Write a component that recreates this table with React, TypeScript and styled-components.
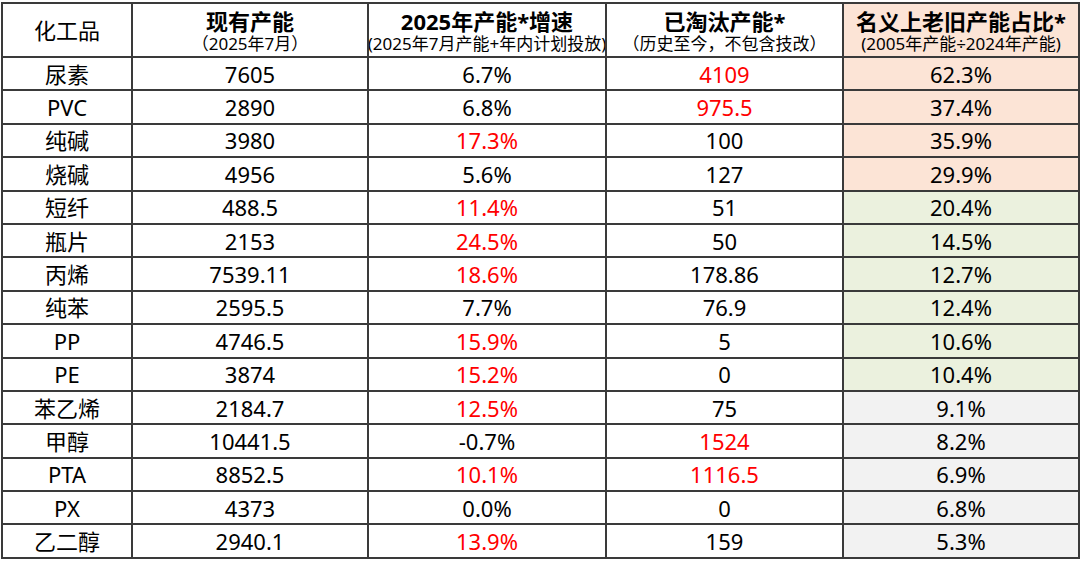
import { createGlobalStyle } from "styled-components";
import styled from "styled-components";

type Tone = "orange" | "green" | "gray";

interface RowData {
  name: string;
  capacity: string;
  growth: string;
  growthRed?: boolean;
  retired: string;
  retiredRed?: boolean;
  share: string;
  tone: Tone;
}

const ROWS: RowData[] = [
  { name: "尿素", capacity: "7605", growth: "6.7%", retired: "4109", retiredRed: true, share: "62.3%", tone: "orange" },
  { name: "PVC", capacity: "2890", growth: "6.8%", retired: "975.5", retiredRed: true, share: "37.4%", tone: "orange" },
  { name: "纯碱", capacity: "3980", growth: "17.3%", growthRed: true, retired: "100", share: "35.9%", tone: "orange" },
  { name: "烧碱", capacity: "4956", growth: "5.6%", retired: "127", share: "29.9%", tone: "orange" },
  { name: "短纤", capacity: "488.5", growth: "11.4%", growthRed: true, retired: "51", share: "20.4%", tone: "green" },
  { name: "瓶片", capacity: "2153", growth: "24.5%", growthRed: true, retired: "50", share: "14.5%", tone: "green" },
  { name: "丙烯", capacity: "7539.11", growth: "18.6%", growthRed: true, retired: "178.86", share: "12.7%", tone: "green" },
  { name: "纯苯", capacity: "2595.5", growth: "7.7%", retired: "76.9", share: "12.4%", tone: "green" },
  { name: "PP", capacity: "4746.5", growth: "15.9%", growthRed: true, retired: "5", share: "10.6%", tone: "green" },
  { name: "PE", capacity: "3874", growth: "15.2%", growthRed: true, retired: "0", share: "10.4%", tone: "green" },
  { name: "苯乙烯", capacity: "2184.7", growth: "12.5%", growthRed: true, retired: "75", share: "9.1%", tone: "gray" },
  { name: "甲醇", capacity: "10441.5", growth: "-0.7%", retired: "1524", retiredRed: true, share: "8.2%", tone: "gray" },
  { name: "PTA", capacity: "8852.5", growth: "10.1%", growthRed: true, retired: "1116.5", retiredRed: true, share: "6.9%", tone: "gray" },
  { name: "PX", capacity: "4373", growth: "0.0%", retired: "0", share: "6.8%", tone: "gray" },
  { name: "乙二醇", capacity: "2940.1", growth: "13.9%", growthRed: true, retired: "159", share: "5.3%", tone: "gray" },
];

const TONES: Record<Tone, string> = {
  orange: "#fce4d6",
  green: "#ebf1de",
  gray: "#f2f2f2",
};

const GlobalStyle = createGlobalStyle`
  html, body {
    margin: 0;
    padding: 0;
    background: #ffffff;
  }
  body {
    font-family: "Noto Sans", "Noto Sans CJK SC", sans-serif;
    color: #000000;
  }
`;

const Page = styled.div`
  padding: 2px 1px 0 1px;
  width: 1078px;
`;

const Table = styled.table`
  border-collapse: collapse;
  table-layout: fixed;
  width: 1077px;
`;

const HeadCell = styled.th<{ $tone?: Tone }>`
  border: 2px solid #3a3a3a;
  background: ${(p) => (p.$tone ? TONES[p.$tone] : "#ffffff")};
  height: 52px;
  padding: 0;
  text-align: center;
  vertical-align: middle;
  font-weight: normal;
  line-height: 1;
  overflow: hidden;
`;

const PlainTitle = styled.div`
  font-size: 22px;
`;

const Title = styled.div`
  font-size: 22px;
  font-weight: bold;
  line-height: 26px;
  white-space: nowrap;
`;

const SubTitle = styled.div`
  font-size: 17px;
  line-height: 19px;
  white-space: nowrap;
  display: flex;
  justify-content: center;
`;

const Cell = styled.td<{ $tone?: Tone; $red?: boolean }>`
  border: 2px solid #3a3a3a;
  background: ${(p) => (p.$tone ? TONES[p.$tone] : "#ffffff")};
  color: ${(p) => (p.$red ? "#ff0000" : "#000000")};
  height: 31.4px;
  padding: 0;
  text-align: center;
  vertical-align: middle;
  font-size: 22px;
  line-height: 1;
`;

export default function App() {
  return (
    <Page>
      <GlobalStyle />
      <Table>
        <colgroup>
          <col style={{ width: 130 }} />
          <col style={{ width: 236 }} />
          <col style={{ width: 238 }} />
          <col style={{ width: 237 }} />
          <col style={{ width: 236 }} />
        </colgroup>
        <thead>
          <tr>
            <HeadCell>
              <PlainTitle>化工品</PlainTitle>
            </HeadCell>
            <HeadCell>
              <Title>现有产能</Title>
              <SubTitle>（2025年7月）</SubTitle>
            </HeadCell>
            <HeadCell>
              <Title>2025年产能*增速</Title>
              <SubTitle>(2025年7月产能+年内计划投放)</SubTitle>
            </HeadCell>
            <HeadCell>
              <Title>已淘汰产能*</Title>
              <SubTitle>（历史至今，不包含技改）</SubTitle>
            </HeadCell>
            <HeadCell $tone="orange">
              <Title>名义上老旧产能占比*</Title>
              <SubTitle>(2005年产能÷2024年产能)</SubTitle>
            </HeadCell>
          </tr>
        </thead>
        <tbody>
          {ROWS.map((row) => (
            <tr key={row.name}>
              <Cell>{row.name}</Cell>
              <Cell>{row.capacity}</Cell>
              <Cell $red={row.growthRed}>{row.growth}</Cell>
              <Cell $red={row.retiredRed}>{row.retired}</Cell>
              <Cell $tone={row.tone}>{row.share}</Cell>
            </tr>
          ))}
        </tbody>
      </Table>
    </Page>
  );
}
